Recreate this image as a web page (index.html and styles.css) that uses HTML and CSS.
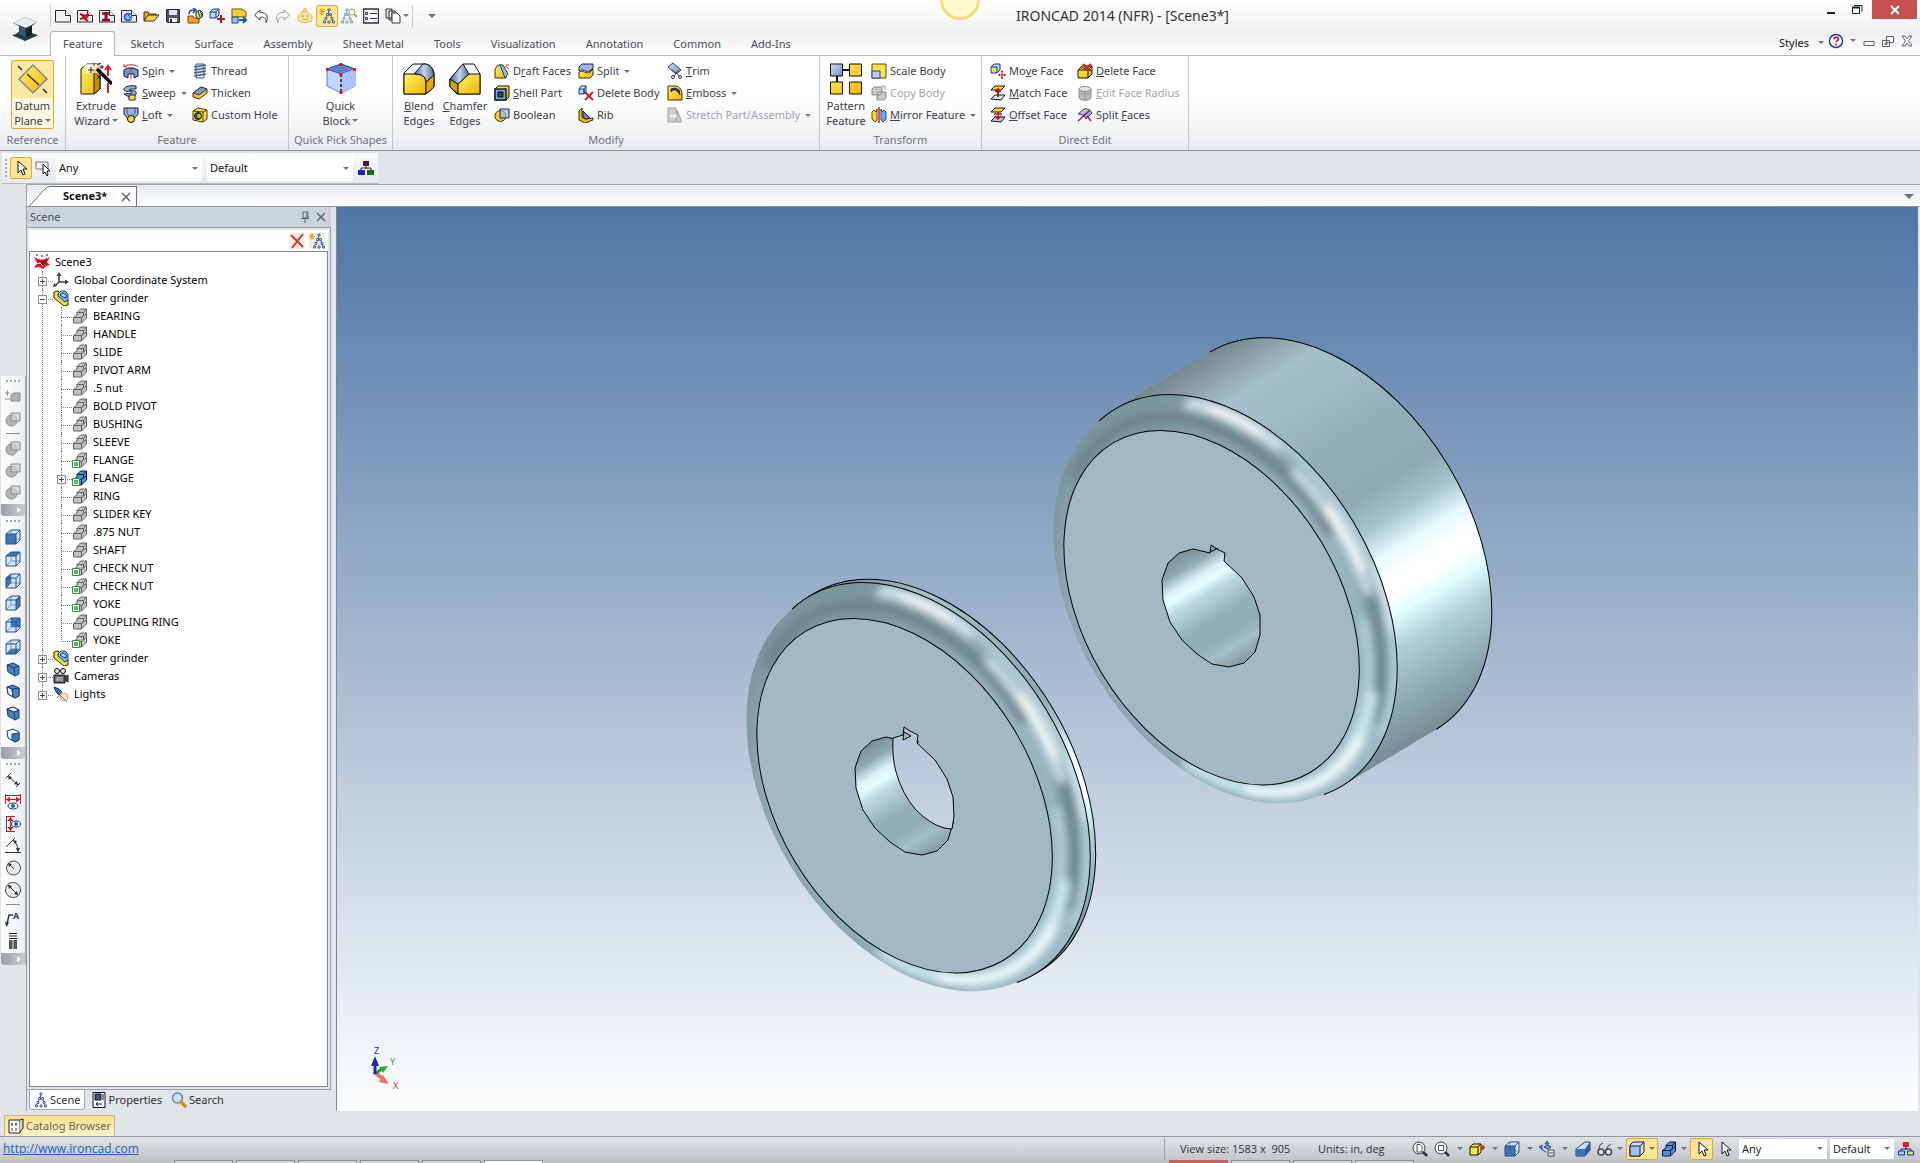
FILE: index.html
```html
<!DOCTYPE html>
<html lang="en">
<head>
<meta charset="utf-8">
<title>IRONCAD 2014 (NFR) - [Scene3*]</title>
<link rel="stylesheet" href="styles.css">
</head>
<body>
<svg class="sprite" aria-hidden="true">
  <defs>
    <linearGradient id="gy" x1="0" y1="0" x2="1" y2="1"><stop offset="0" stop-color="#fff36a"/><stop offset="1" stop-color="#f5b400"/></linearGradient>
    <linearGradient id="gb" x1="0" y1="0" x2="1" y2="1"><stop offset="0" stop-color="#d3e2f8"/><stop offset="1" stop-color="#6c8cc4"/></linearGradient>
    <linearGradient id="gsteel" x1="0" y1="0" x2="1" y2="0"><stop offset="0" stop-color="#48648e"/><stop offset=".5" stop-color="#c3d5ea"/><stop offset="1" stop-color="#4d6d9c"/></linearGradient>
  </defs>
  <symbol id="page" viewBox="0 0 16 16"><path d="M.5 2.500h10l5 5v6.500H.5z" fill="#eef0f4" stroke="#26292e"/><path d="M10.500 2.500v5h5" fill="#fff" stroke="#26292e"/></symbol>
  <symbol id="page-red" viewBox="0 0 16 16"><use href="#page"/><path d="M3 6l5 2 4-2M3 11l4-1 4 3M5 7l3 4 3-3" stroke="#c4101c" stroke-width="2" fill="none"/></symbol>
  <symbol id="page-i" viewBox="0 0 16 16"><use href="#page"/><path d="M3 5.500h8M3 12h8" stroke="#8d0f18" stroke-width="2.500"/><path d="M7 4v8" stroke="#8d0f18" stroke-width="3"/></symbol>
  <symbol id="page-cad" viewBox="0 0 16 16"><use href="#page"/><circle cx="7" cy="9" r="4" fill="#86bff0" stroke="#2b64b0"/><path d="M9 7a3 3 0 1 0 0 4M7 7l4 4" stroke="#1d4fa0" fill="none"/></symbol>
  <symbol id="open" viewBox="0 0 16 16"><path d="M1 13V4h4l1 2h7v2" fill="#d9ae35" stroke="#3a2c06"/><path d="M1 13l4-6h11l-5 6z" fill="#ffd24a" stroke="#3a2c06"/></symbol>
  <symbol id="save" viewBox="0 0 16 16"><path d="M1.500 1.500h13v13h-12l-1-1z" fill="#4a5263" stroke="#23272f"/><path d="M4 2h8v5H4z" fill="#dfe4ee"/><path d="M4 10h8v4H4z" fill="#f4f5f8"/><path d="M5 11h2v3H5z" fill="#23272f"/></symbol>
  <symbol id="import" viewBox="0 0 16 16"><path d="M1 8h5l1 2h5v5H1z" fill="#f4a428" stroke="#744a06"/><path d="M2 6c0-4 3-4 6-4M6 0l3 2-3 3" stroke="#1c49b0" stroke-width="1.500" fill="none"/><path d="M9 4l4-2 3 3-1 4-4 2-2-3z" fill="#e6d65c" stroke="#222"/><path d="M11 3l2 6M13 2l2 6" stroke="#2450a6"/></symbol>
  <symbol id="addcube" viewBox="0 0 16 16"><path d="M1 4h6v6H1zM1 4l3-3h6L7 4M7 10l3-3V1" fill="#bcd4f6" stroke="#1b3c86"/><path d="M12 7v8M8 11h8" stroke="#c0161c" stroke-width="2"/></symbol>
  <symbol id="export" viewBox="0 0 16 16"><path d="M1 1h10l4 3v5H1z" fill="#f9cd2e" stroke="#6d5204"/><path d="M1 9h6v6H1z" fill="#a8c4ee" stroke="#1b3c86"/><path d="M8 12h7M12 9l3 3-3 3" stroke="#2450a6" stroke-width="2" fill="none"/></symbol>
  <symbol id="undo" viewBox="0 0 16 16"><path d="M7 2L1.500 7 7 12V9.500c4-1 6 0 6 5C16 9 14 4 7 4.500z" fill="#fff" stroke="#3c3f44"/></symbol>
  <symbol id="redo" viewBox="0 0 16 16"><path d="M9 2l5.500 5L9 12V9.500c-4-1-6 0-6 5C0 9 2 4 9 4.500z" fill="#fff" stroke="#9a9da2"/></symbol>
  <symbol id="bell" viewBox="0 0 16 16"><path d="M2 13c-3-3 0-9 6-10 6 1 9 7 6 10-3 2-9 2-12 0z" fill="#f9e6a6" stroke="#e0b95c"/><circle cx="8" cy="2" r="1.500" fill="#f6dd8c" stroke="#e0b95c"/><circle cx="5.500" cy="8" r="1" fill="#c99b40"/><circle cx="10.500" cy="8" r="1" fill="#c99b40"/><path d="M5 11.500h6" stroke="#d9ab52"/></symbol>
  <symbol id="tree" viewBox="0 0 16 16"><path d="M8.500 3v3M7 8l-1 2M11 8l1 2M5 12l-1 1M12 12l1 1" stroke="#456a92"/><path d="M8 1h2v2H8zM6.500 5.500h2v2h-2zM9.500 5.500h2v2h-2zM5 9.500h2v2H5zM11 9.500h2v2h-2zM3.500 13h2v2h-2zM8 13h2v2H8zM12.500 13h2v2h-2z" fill="#dcefff" stroke="#456a92"/></symbol>
  <symbol id="tree-star" viewBox="0 0 16 16"><use href="#tree" x="1"/><path d="M3 0v7M0 3.500h6M1 1l4 5M5 1L1 6" stroke="#dba016"/></symbol>
  <symbol id="tree-find" viewBox="0 0 16 16"><g opacity=".6"><use href="#tree" x="-3"/></g><circle cx="11" cy="4" r="3" fill="#eef6e0" stroke="#a9a56a"/><path d="M13 6l3 3" stroke="#c9a23c" stroke-width="2"/></symbol>
  <symbol id="list" viewBox="0 0 16 16"><path d="M.5 1h15v14H.5z" fill="#f7f8fa" stroke="#303339" stroke-width="1.500"/><path d="M7 5.500h7M7 10.500h7" stroke="#303339"/><path d="M2.500 4.500h2v2h-2zM2.500 9.500h2v2h-2z" fill="#fff" stroke="#303339"/></symbol>
  <symbol id="docs" viewBox="0 0 16 16"><path d="M1 1h6v9H1zM4 3h6v9H4z" fill="#e6e8ec" stroke="#303339"/><path d="M7 5h5l3 3v7H7z" fill="#fff" stroke="#303339"/></symbol>

  <symbol id="datum" viewBox="0 0 32 32"><path d="M16 2l14 14-14 14L2 16z" fill="url(#gy)" stroke="#7b8ba0" stroke-width="1.500"/><path d="M1 3l4 4M10 11l12 11M26 26l4 4" stroke="#2d2d1a" stroke-width="1.500"/></symbol>
  <symbol id="extrude" viewBox="0 0 32 32"><path d="M1 6l6-5h13v25l-6 5H1z" fill="url(#gy)" stroke="#1d1600"/><path d="M14 8l6-6v24l-6 5z" fill="#c18f00" stroke="#1d1600"/><path d="M4 1h17v9H5z" fill="#fff" fill-opacity=".7"/><path d="M17 6l15 15" stroke="#111" stroke-width="3.500"/><path d="M28 4v9M28 20v10M25 7l3-4 3 4" stroke="#d81c22" stroke-width="2" fill="none"/><path d="M8 7h6M11 4v6M17 2l4-2M22 2v4M20 4h4M14 0v3M17 12l4 4M21 12l-4 4" stroke="#222"/></symbol>
  <symbol id="spin" viewBox="0 0 16 16"><path d="M1 7l4-2h6l4 2v6l-4 2v-4H5v4l-4-2z" fill="#7795c8" stroke="#111c33"/><path d="M1 4c3-3 11-3 14 0M1 1v3h3M8 5v11" stroke="#d3222a" fill="none"/></symbol>
  <symbol id="sweep" viewBox="0 0 16 16"><path d="M13 1C6 0 0 2 1 5c1 2 8 1 8 3 0 1-4 0-8 1l5 3c5 0 8-2 7-5-1-2-7-1-7-2 0-1 4-1 7-1z" fill="#9db5de" stroke="#111c33"/><path d="M6 10h6v5H6z" fill="#ffe14a" stroke="#222"/></symbol>
  <symbol id="loft" viewBox="0 0 16 16"><path d="M1 1h14v6l-5 6H6L1 7z" fill="#9db5de" stroke="#111c33"/><path d="M4 1v5l3 4M12 1v5l-3 4" stroke="#42597f" fill="none"/><circle cx="8" cy="12" r="3.500" fill="#ffd62c" stroke="#111"/></symbol>
  <symbol id="thread" viewBox="0 0 16 16"><path d="M4 1h8v14H4z" fill="#dbe7f6" stroke="#476089"/><path d="M2 4l12-2M2 7l12-2M2 10l12-2M2 13l12-2" stroke="#476089" stroke-width="1.500"/></symbol>
  <symbol id="thicken" viewBox="0 0 16 16"><path d="M1 8l8-6 6 2v4l-8 6-6-2z" fill="#f0c62e" stroke="#3a3000"/><path d="M1 8l8-6 6 2-8 6z" fill="#8595bd" stroke="#3a3f55"/></symbol>
  <symbol id="hole" viewBox="0 0 16 16"><path d="M1 4l5-3 9 2v9l-4 3-10-2z" fill="#ffe04a" stroke="#4b3d00"/><path d="M11 5v10M11 5l4-2M1 4l10 1" stroke="#4b3d00"/><circle cx="6" cy="9" r="3.500" fill="#1d5f68" stroke="#111"/><circle cx="7" cy="9" r="2" fill="#e2b72a"/></symbol>
  <symbol id="quick" viewBox="0 0 32 32"><path d="M2 6L16 1l14 5v17L16 30 2 23z" fill="#c3d5ff" stroke="#5a7bd0"/><path d="M2 6L16 1l14 5-14 5z" fill="#5c84cf" stroke="#2c54a8"/><path d="M16 11l14-5v17l-14 7z" fill="#aac4fa"/><path d="M16 11v19" stroke="#111" stroke-width="1.500" stroke-dasharray="3 2"/><path d="M1 5h3v3H1zM14.500 0h3v3h-3zM28 5h3v3h-3zM14.500 10h3v3h-3zM14.500 28h3v3h-3z" fill="#e01626"/></symbol>
  <symbol id="blend" viewBox="0 0 32 32"><path d="M1 10l9-9h12c5 0 9 5 9 10v13l-8 7H1z" fill="#eff4fb" stroke="#111"/><path d="M1 11h11c7 0 11 3 11 9v11H1z" fill="url(#gy)" stroke="#111"/><path d="M23 19l8-7v12l-8 7z" fill="#e8a800" stroke="#111"/><path d="M11 11L20 1h2c5 0 9 6 9 11l-8 7c0-6-5-8-12-8z" fill="url(#gsteel)" stroke="#111"/></symbol>
  <symbol id="chamfer" viewBox="0 0 32 32"><path d="M1 16L14 1h11l6 10v20H8l-7-7z" fill="#f4f8fd" stroke="#111"/><path d="M1 16l8 5v10l-8-7z" fill="#d9a100" stroke="#111"/><path d="M9 21l11-10h11v20H9z" fill="url(#gy)" stroke="#111"/><path d="M1 16L14 1l6 10L9 21z" fill="url(#gsteel)" stroke="#111"/></symbol>
  <symbol id="draft" viewBox="0 0 16 16"><path d="M1 6l3-4h4l4 9v4H1z" fill="url(#gy)" stroke="#3a3000"/><path d="M6 2h3l5 9-3 4z" fill="#9db5de" stroke="#2b3e66"/><path d="M11 3l4 3M12 2h3" stroke="#c22"/></symbol>
  <symbol id="shell" viewBox="0 0 16 16"><path d="M1 4l3-3h11v11l-3 3H1z" fill="url(#gy)" stroke="#1c1500"/><path d="M1 4h11v11H1z" fill="#7fa0d4" stroke="#12203c" stroke-width="1.500"/><path d="M4 7h5v5H4z" fill="#2d4470" stroke="#111"/></symbol>
  <symbol id="bool" viewBox="0 0 16 16"><circle cx="6.500" cy="9" r="5.500" fill="#f7cb2c" stroke="#3a3000"/><path d="M6 2h9v9H6z" fill="#9db5e8" fill-opacity=".7" stroke="#1b2d55"/></symbol>
  <symbol id="split" viewBox="0 0 16 16"><path d="M1 9c4-3 7 3 11 0l3-3v6l-3 3H1z" fill="url(#gy)" stroke="#3a3000"/><path d="M1 4l3-3h11v4l-3 3c-4 2-7-3-11 0z" fill="#9db5e8" stroke="#1b2d55"/></symbol>
  <symbol id="delbody" viewBox="0 0 16 16"><path d="M1 4h5v5H1zM1 4l2-3h5v6L6 9V4l2-3" fill="#bcd4f6" stroke="#1b3c86"/><path d="M7 7l8 8M15 7l-8 8" stroke="#c0232b" stroke-width="2"/></symbol>
  <symbol id="rib" viewBox="0 0 16 16"><path d="M1 4l3-3v9l3 2 8-1v2l-8 3-6-3z" fill="#e8bd2a" stroke="#3a3000"/><path d="M5 4l7 7-4 1-3-2z" fill="#6f87b5" stroke="#222"/></symbol>
  <symbol id="trim" viewBox="0 0 16 16"><path d="M1 4l5-4 8 7-5 4z" fill="url(#gb)" stroke="#333a55"/><path d="M5 7l8 6M12 7l-5 6" stroke="#444"/><circle cx="6" cy="14" r="1.500" fill="none" stroke="#333"/><circle cx="13" cy="14" r="1.500" fill="none" stroke="#333"/></symbol>
  <symbol id="emboss" viewBox="0 0 16 16"><path d="M1 1h8c4 1 6 4 6 8v6H1z" fill="url(#gy)" stroke="#3a3000"/><path d="M4 7c3-4 6-2 9 3l-1-5-4-2-4 1z" fill="#244070" stroke="#16284a"/></symbol>
  <symbol id="stretch" viewBox="0 0 16 16"><path d="M1 1h8v14H1zM10 3l5 12h-5z" fill="#cfcfcf" stroke="#a0a0a0"/><path d="M3 9h6M7 7l2 2-2 2" stroke="#fff" stroke-width="1.500" fill="none"/></symbol>
  <symbol id="pattern" viewBox="0 0 32 32"><path d="M12 7h8M7 12v8" stroke="#111" stroke-width="2"/><path d="M.5 1h12v12H.5z" fill="url(#gb)" stroke="#111"/><path d="M19.500 1h12v12h-12zM.5 19h12v12H.5zM19.500 19h12v12h-12z" fill="url(#gy)" stroke="#111"/></symbol>
  <symbol id="scale" viewBox="0 0 16 16"><path d="M1 1h14v14H1z" fill="#ffe04a" stroke="#5a4a00"/><path d="M1 8h8v7H1z" fill="#b8ccf2" stroke="#2c4478"/></symbol>
  <symbol id="copy" viewBox="0 0 16 16"><path d="M1 4l2-2h8v6l-2 2H1zM6 9l2-2h7v6l-2 2H6z" fill="#c9c9c9" stroke="#8e8e8e"/><path d="M11 1h3v4" stroke="#999" fill="none"/></symbol>
  <symbol id="mirror" viewBox="0 0 16 16"><path d="M6 2v11l-2 2-3-3V5l2-2 2 2z" fill="#ffd62c" stroke="#5a4a00"/><path d="M10 2v11l2 2 3-3V5l-2-2-2 2z" fill="#7da6ee" stroke="#1f4ca0"/><path d="M8 0v16" stroke="#d0202a" stroke-width="1.500"/></symbol>
  <symbol id="move" viewBox="0 0 16 16"><path d="M1 4h6v6H1zM1 4l3-3h6v6l-3 3" fill="#bcd4f6" stroke="#1b3c86"/><path d="M2 5h4v4H2z" fill="#ffdf4a"/><path d="M12 8v8M8 12h8" stroke="#c0232b"/><path d="M12 7l1.500 2h-3zM12 16l1.500-2h-3zM8 12l2-1.500v3zM16 12l-2-1.500v3z" fill="#c0232b"/></symbol>
  <symbol id="match" viewBox="0 0 16 16"><path d="M1 5l4-4h10l-4 4z" fill="#ffd62c" stroke="#111"/><path d="M1 14l4-4h10l-4 5z" fill="#dde3f4" stroke="#111"/><path d="M8 4v8M5.500 7L8 4l2.500 3" stroke="#b3141c" stroke-width="2" fill="none"/></symbol>
  <symbol id="offset" viewBox="0 0 16 16"><path d="M1 5l4-4h10l-4 4z" fill="#ffd62c" stroke="#111"/><path d="M1 14l4-4h10l-4 5z" fill="#b9c8ee" stroke="#111"/><path d="M8 5v7M5 9l3 3 3-3M4 7h8" stroke="#b3141c" stroke-width="1.500" fill="none"/></symbol>
  <symbol id="delface" viewBox="0 0 16 16"><path d="M1 7l4-4h10v8l-4 4H1z" fill="url(#gy)" stroke="#1c1500"/><path d="M1 7h10v8M11 7l4-4" stroke="#1c1500" fill="none"/><path d="M3 6l3-3h7l-3 3z" fill="#58a03c"/><path d="M6 1l8 7M14 1L7 7" stroke="#d21c24" stroke-width="2"/></symbol>
  <symbol id="editrad" viewBox="0 0 16 16"><path d="M2 4v9c2 3 10 3 12 0V4z" fill="#bcbcbc" stroke="#8a8a8a"/><ellipse cx="8" cy="4" rx="6" ry="2.500" fill="#e4e4e4" stroke="#8a8a8a"/><path d="M4 9h8M8 7v7" stroke="#888" stroke-dasharray="2 1"/></symbol>
  <symbol id="splitf" viewBox="0 0 16 16"><path d="M1 7l6-5c4-1 6 1 8 4l-6 6c-1-3-4-5-8-5z" fill="url(#gb)" stroke="#333a55"/><path d="M1 14L13 3M10 9l4 5" stroke="#b3124a" stroke-width="1.500"/></symbol>

  <symbol id="cursor" viewBox="0 0 16 16"><path d="M5 1v12l3-3 2 5 2-1-2-5h4z" fill="#fff" stroke="#111"/></symbol>
  <symbol id="boxcursor" viewBox="0 0 16 16"><path d="M1 2h12v7H1z" fill="none" stroke="#777"/><path d="M8 4v10l2-2 2 4 1-1-1-4h3z" fill="#fff" stroke="#111"/></symbol>
  <symbol id="hier" viewBox="0 0 16 16"><path d="M8 5v4M3 11V8h10v3" stroke="#222" fill="none"/><path d="M5 1h6v5H5z" fill="#5c1416"/><path d="M0 10h7v5H0z" fill="#1420c8"/><path d="M9 10h7v5H9z" fill="#14681c"/></symbol>
  <symbol id="hier2" viewBox="0 0 16 16"><path d="M8 5v4M3 11V8h10v3" stroke="#1c2f8e" fill="none"/><path d="M5 1h6v5H5z" fill="#e01a2c"/><path d="M.5 10h6v4h-6z" fill="#9fd0f4" stroke="#1c2f8e"/><path d="M9.500 10h6v4h-6z" fill="#c4ec60" stroke="#1c2f8e"/></symbol>

  <symbol id="scene" viewBox="0 0 16 16"><path d="M0 3l5 2.500h6L16 3l-3 5 3 3-4 1-3 3-4-2-5 1 3-5z" fill="#e01620"/><path d="M4 5l4 2 5-3-1 5-4 3-4-2z" fill="#a40c14"/><path d="M2 10l4-1 3 3" stroke="#fff" fill="none"/><path d="M3 0v2M8 1v2M13 0v2" stroke="#111"/></symbol>
  <symbol id="axes" viewBox="0 0 16 16"><path d="M6 2v8h8M6 10l-4 4" stroke="#3b3b3b" stroke-width="1.500" fill="none"/><path d="M6 0l2.500 4h-5zM16 10l-4-2.500v5zM0 15l1-4 3 3z" fill="#3b3b3b"/></symbol>
  <symbol id="asm" viewBox="0 0 16 16"><path d="M1 2l4-1 10 9v5l-4 1L1 8z" fill="#f1de28" stroke="#2e2a06"/><path d="M5 4l3-3h4l3 3v6l-3 2-7-6z" fill="#7db4ec" stroke="#1d3f80"/><path d="M7 5l3-2 3 2v3l-3-1z" fill="#c3e0fb" stroke="#1d3f80"/></symbol>
  <symbol id="part" viewBox="0 0 16 16"><path d="M1.500 9.500L5 7V4.500L8.500 1h6v9l-5 5h-8z" fill="#c2c2c2" stroke="#636363"/><path d="M1.500 9.500h8V15M9.500 9.500l2-2.500V4.500H5M11.500 4.500l3-3.500M9.500 9.500l5-4" stroke="#636363" fill="none"/></symbol>
  <symbol id="part-blue" viewBox="0 0 16 16"><path d="M1.500 9.500L5 7V4.500L8.500 1h6v9l-5 5h-8z" fill="#4f92e0" stroke="#08163a"/><path d="M1.500 9.500h8V15M9.500 9.500l2-2.500V4.500H5M11.500 4.500l3-3.500M9.500 9.500l5-4" stroke="#08163a" fill="none"/></symbol>
  <symbol id="tag" viewBox="0 0 16 16"><path d="M.5 8.500h7v7h-7z" fill="#fff" stroke="#2f8f3c"/><path d="M2 10h4v4H2z" fill="#5cb566"/></symbol>
  <symbol id="part-tag" viewBox="0 0 16 16"><use href="#part"/><use href="#tag"/></symbol>
  <symbol id="part-blue-tag" viewBox="0 0 16 16"><use href="#part-blue"/><use href="#tag"/></symbol>
  <symbol id="camera" viewBox="0 0 16 16"><circle cx="4" cy="3" r="2.500" fill="#ddd" stroke="#111"/><circle cx="10" cy="3" r="2.500" fill="#ddd" stroke="#111"/><path d="M1 7h11v8H1zM12 9l3-2v7l-3-2" fill="#62626e" stroke="#111"/><path d="M3 10h7M3 12h7" stroke="#ddd"/></symbol>
  <symbol id="light" viewBox="0 0 16 16"><path d="M1 1l5 2 3 3-3 3-3-3z" fill="#3d67a8" stroke="#1a3361"/><circle cx="11" cy="11" r="4" fill="#fbe3bd" stroke="#c8a77a"/><path d="M4 12L9 6M7 9l7 7" stroke="#8f7a60"/></symbol>

  <symbol id="g-size" viewBox="0 0 16 16"><path d="M0 4h5M2.500 1.500v5M0 10h5" stroke="#8f8f8f"/><path d="M6 6l3-2h6v8H6z" fill="#b3b3b3" stroke="#8a8a8a"/></symbol>
  <symbol id="g-bool" viewBox="0 0 16 16"><circle cx="6.500" cy="9.500" r="5.500" fill="#b5b5b5" stroke="#898989"/><path d="M6 2h9v8H6z" fill="#cfcfcf" fill-opacity=".7" stroke="#898989"/></symbol>
  <symbol id="wire" viewBox="0 0 16 16"><path d="M1 5l5-4h9v10l-4 4H1z" fill="#d3e6f8"/><path d="M6 1v9h9M6 10l-5 5" stroke="#6f9cc8" fill="none"/></symbol>
  <symbol id="edges" viewBox="0 0 16 16"><path d="M1 5l5-4h9v10l-4 4H1zM1 5h10v10M11 5l4-4" stroke="#24507f" fill="none"/></symbol>
  <symbol id="v-front" viewBox="0 0 16 16"><use href="#wire"/><path d="M1 5h10v10H1z" fill="#3c76b4"/><use href="#edges"/></symbol>
  <symbol id="v-top" viewBox="0 0 16 16"><use href="#wire"/><path d="M1 5l5-4h9l-4 4z" fill="#3c76b4"/><use href="#edges"/></symbol>
  <symbol id="v-left" viewBox="0 0 16 16"><use href="#wire"/><path d="M1 5l5-4v9l-5 5z" fill="#3c76b4"/><use href="#edges"/></symbol>
  <symbol id="v-right" viewBox="0 0 16 16"><use href="#wire"/><path d="M11 5l4-4v10l-4 4z" fill="#3c76b4"/><use href="#edges"/></symbol>
  <symbol id="v-back" viewBox="0 0 16 16"><use href="#wire"/><path d="M6 1h9v9H6z" fill="#3c76b4"/><use href="#edges"/></symbol>
  <symbol id="v-bottom" viewBox="0 0 16 16"><use href="#wire"/><path d="M1 15l5-5h9l-4 5z" fill="#3c76b4"/><use href="#edges"/></symbol>
  <symbol id="i-solid" viewBox="0 0 16 16"><path d="M2 4l6-2 6 3v8l-4 2-7-4z" fill="#4a82bd" stroke="#1d3f66"/><path d="M2 4l7 3 5-2M9 7l1 8" stroke="#1d3f66" fill="none"/></symbol>
  <symbol id="i-left" viewBox="0 0 16 16"><use href="#i-solid"/><path d="M2 4l5 2 1 8-5-3z" fill="#e6f0fa" stroke="#1d3f66"/><path d="M7 6l7-1v8l-4 2-2-1z" fill="#4a82bd" stroke="#1d3f66"/></symbol>
  <symbol id="i-top" viewBox="0 0 16 16"><use href="#i-solid"/><path d="M2 4l6-2 6 3-5 2z" fill="#e6f0fa" stroke="#1d3f66"/></symbol>
  <symbol id="i-corner" viewBox="0 0 16 16"><path d="M2 4l6-2 6 3v8l-4 2-7-4z" fill="#eef5fc" stroke="#1d3f66"/><path d="M7 7l7-1v7l-4 2-3-2z" fill="#3c76b4" stroke="#1d3f66"/></symbol>
  <symbol id="dim" viewBox="0 0 16 16"><path d="M1 6l5-5M11 15l4-4M3 4l10 9" stroke="#333" fill="none"/><path d="M3 4l4 1-3 3zM13 13l-4-1 3-3z" fill="#333"/></symbol>
  <symbol id="dim-h" viewBox="0 0 16 16"><path d="M.5 0v10M15.500 0v10M1 5.500h14" stroke="#d8141c"/><path d="M1 1.500h14" stroke="#444"/><path d="M1 5.500l4-3v6zM15 5.500l-4-3v6z" fill="#d8141c"/><ellipse cx="8" cy="12" rx="5" ry="3" fill="#fff" stroke="#1c3c78"/><circle cx="8" cy="12" r="2" fill="#1c58b8"/></symbol>
  <symbol id="dim-v" viewBox="0 0 16 16"><path d="M1.500 1v14" stroke="#444"/><path d="M1 .5h9M1 15.500h9M5.500 1v14" stroke="#d8141c"/><path d="M5.500 1l3 4h-6zM5.500 15l3-4h-6z" fill="#d8141c"/><ellipse cx="11" cy="8" rx="4.500" ry="3" fill="#fff" stroke="#1c3c78"/><circle cx="11" cy="8" r="2" fill="#1c58b8"/></symbol>
  <symbol id="dim-a" viewBox="0 0 16 16"><path d="M0 14.500h16M1 9l9-9M8 3c4 2 5 6 5 11" stroke="#333" fill="none"/><path d="M8 2l4 1-2 3zM13 14l-2-4h4z" fill="#333"/></symbol>
  <symbol id="dim-r" viewBox="0 0 16 16"><circle cx="8.500" cy="8" r="7" fill="#ececec" stroke="#4a4a4a"/><path d="M4 4l5 5" stroke="#333"/><path d="M3 3l4 1-3 3z" fill="#333"/></symbol>
  <symbol id="dim-d" viewBox="0 0 16 16"><circle cx="8" cy="8" r="7.500" fill="#ececec" stroke="#4a4a4a"/><path d="M3 3l10 10" stroke="#333"/><path d="M3 3l4 1-3 3zM13 13l-4-1 3-3z" fill="#333"/></symbol>
  <symbol id="bolt" viewBox="0 0 16 16"><path d="M4 .5h8M4 3h8M4 5.500h8" stroke="#222"/><path d="M4 7h8v9H4z" fill="#555"/><path d="M7 7h2v9H7z" fill="#a0a0a0"/></symbol>

  <symbol id="props" viewBox="0 0 16 16"><path d="M2 .5h12v15H2z" fill="#fff" stroke="#111"/><path d="M4 2h6v6H4z" fill="#35598c" stroke="#111"/><path d="M12 2v6M5 12h6M5 12l2-2M5 12l2 2" stroke="#111"/></symbol>
  <symbol id="search" viewBox="0 0 16 16"><circle cx="6.500" cy="6" r="5" fill="#cfe0fb" stroke="#6c7fa8" stroke-width="1.500"/><path d="M10 10l4 4" stroke="#c88f1e" stroke-width="3.500" stroke-linecap="round"/></symbol>
  <symbol id="catalog" viewBox="0 0 16 16"><path d="M1 2h11v13H1z" fill="#fff" stroke="#222"/><path d="M12 2l3-1v9l-3 4" fill="#d6d6d6" stroke="#222"/><path d="M4 5v3M8 5v3M4 10v3M8 10v3M3 6h2M7 6h2" stroke="#333"/></symbol>
  <symbol id="redx" viewBox="0 0 16 16"><path d="M2 2l12 12M14 1L3 15" stroke="#d3333a" stroke-width="2"/></symbol>
  <symbol id="pin" viewBox="0 0 16 16"><path d="M6 3h5v6H6zM4 9.500h8M8 10v4M10 3v6" stroke="#5b6470" fill="none"/></symbol>
  <symbol id="close" viewBox="0 0 16 16"><path d="M4 4l8 8M12 4l-8 8" stroke="#5b6470" stroke-width="1.500"/></symbol>
  <symbol id="zoomfit" viewBox="0 0 16 16"><circle cx="7" cy="7" r="6" fill="#eef0f2" stroke="#444"/><path d="M5 3.500h3l2 2V11H5z" fill="#fff" stroke="#555"/><path d="M11 11l4 4" stroke="#333" stroke-width="2.500"/></symbol>
  <symbol id="zoomwin" viewBox="0 0 16 16"><circle cx="7" cy="7" r="6" fill="#eef0f2" stroke="#444"/><path d="M4.500 4.500h5v5h-5z" fill="#fff" stroke="#555"/><path d="M11 11l4 4" stroke="#333" stroke-width="2.500"/></symbol>
  <symbol id="ycube" viewBox="0 0 16 16"><path d="M1 6l3-3h8v8l-3 3H1z" fill="#ffe450" stroke="#111"/><path d="M1 6h8v8M9 6l3-3" fill="none" stroke="#111"/><path d="M14 4v5M12 6.500h4" stroke="#d8141c" stroke-width="1.500"/></symbol>
  <symbol id="fly" viewBox="0 0 16 16"><path d="M8 0l2 3H6zM0 6l3-2v4zM5 6l4-2 3 2-3 2zM2 8l5 3" fill="#6ba2d6" stroke="#244e80"/><path d="M9 9h6v6H9z" fill="#f2f2f2" stroke="#444"/><path d="M10 12h4" stroke="#444"/></symbol>
  <symbol id="wedge" viewBox="0 0 16 16"><path d="M1 8L10 1h5v8l-5 6H1z" fill="#cbe0f4" stroke="#24507f"/><path d="M1 8h9v7H1z" fill="#3c76b4"/><path d="M10 8l5-7v8l-5 6z" fill="#2d5f98"/></symbol>
  <symbol id="glasses" viewBox="0 0 16 16"><circle cx="4" cy="11" r="3" fill="#dbe6f0" stroke="#445" stroke-width="1.500"/><circle cx="11.500" cy="11" r="3" fill="#dbe6f0" stroke="#445" stroke-width="1.500"/><path d="M1.500 9L3 4l3-2M9 9l2-4 3-2M7 11h2" stroke="#445" fill="none"/></symbol>
  <symbol id="pcube" viewBox="0 0 16 16"><path d="M1 4l3-3h11v10l-4 4H1z" fill="#cfdffa" stroke="#223"/><path d="M1 5h10v10H1z" fill="#a2bdf0" stroke="#223"/><path d="M11 5l4-4" stroke="#223"/></symbol>
  <symbol id="logo" viewBox="0 0 26 26"><path d="M1 8l12-6 12 5-5 4v7l5 2-12 6-11-6 5-3v-6z" fill="#263c4e"/><path d="M1 8l12-6 12 5-11 6z" fill="#e9edf0"/><path d="M3 8l10 5 1 9-9-4 3-2v-5z" fill="#3b576b"/><path d="M1 20l12 5 12-5" stroke="#263c4e" stroke-width="1.500" fill="none"/><path d="M14 13l6-2v8l-6 4z" fill="#16222e"/></symbol>
</svg>

<header class="header">
  <button class="app-button" aria-label="Application menu"><svg class="logo"><use href="#logo"/></svg></button>
  <div class="title-row">
    <div class="quick-access">
      <button aria-label="New"><svg><use href="#page"/></svg></button>
      <button aria-label="New scene"><svg><use href="#page-red"/></svg></button>
      <button aria-label="New drawing"><svg><use href="#page-i"/></svg></button>
      <button aria-label="New CAD"><svg><use href="#page-cad"/></svg></button>
      <button aria-label="Open"><svg><use href="#open"/></svg></button>
      <button aria-label="Save"><svg><use href="#save"/></svg></button>
      <button aria-label="Import"><svg><use href="#import"/></svg></button>
      <button aria-label="Insert part"><svg><use href="#addcube"/></svg></button>
      <button aria-label="Export"><svg><use href="#export"/></svg></button>
      <button aria-label="Undo"><svg><use href="#undo"/></svg></button>
      <button aria-label="Redo"><svg><use href="#redo"/></svg></button>
      <button aria-label="Render"><svg><use href="#bell"/></svg></button>
      <button class="is-on" aria-label="Scene browser"><svg><use href="#tree-star"/></svg></button>
      <button aria-label="Find in tree"><svg><use href="#tree-find"/></svg></button>
      <button aria-label="Properties"><svg><use href="#list"/></svg></button>
      <button class="wide" aria-label="Windows"><svg><use href="#docs"/></svg><i class="caret"></i></button>
      <button class="more" aria-label="Customize"><i class="caret bar"></i></button>
    </div>
    <h1 class="window-title">IRONCAD 2014 (NFR) - [Scene3*]</h1>
    <div class="window-buttons">
      <button aria-label="Minimize"><svg viewBox="0 0 16 16"><path d="M4 11h8" stroke="#222" stroke-width="2"/></svg></button>
      <button aria-label="Restore"><svg viewBox="0 0 16 16"><path d="M3.500 5.500h7v6h-7zM5 3.500h8v6" stroke="#222" fill="none"/><path d="M3 5.500h8" stroke="#222" stroke-width="2"/></svg></button>
      <button class="close" aria-label="Close"><svg viewBox="0 0 16 16"><path d="M4 4l8 8M12 4l-8 8" stroke="#fff" stroke-width="2"/></svg></button>
    </div>
  </div>
  <div class="tab-row">
    <nav class="tabs">
      <button class="is-active">Feature</button><button>Sketch</button><button>Surface</button><button>Assembly</button><button>Sheet Metal</button><button>Tools</button><button>Visualization</button><button>Annotation</button><button>Common</button><button>Add-Ins</button>
    </nav>
    <div class="tab-tools">
      <button class="styles-button">Styles <i class="caret"></i></button>
      <button aria-label="Help"><svg viewBox="0 0 16 16"><circle cx="8" cy="8" r="6.500" fill="#fff" stroke="#24407c" stroke-width="1.500"/><path d="M6 6.500c0-3 4.500-3 4.500-.5 0 1.500-2 1.500-2.200 3.200M8 10.500v2" stroke="#e01626" stroke-width="1.700" fill="none"/></svg></button>
      <button class="help-menu" aria-label="Help options"><i class="caret"></i></button>
      <button aria-label="Minimize document"><svg viewBox="0 0 16 16"><path d="M3 8.500h10v4H3z" fill="#fff" stroke="#5a5f78"/></svg></button>
      <button aria-label="Restore document"><svg viewBox="0 0 16 16"><path d="M6.500 3.500h7v6h-7zM2.500 7.500h7v6h-7zM5 10h2v1.500H5z" fill="#fff" stroke="#5a5f78"/></svg></button>
      <button aria-label="Close document"><svg viewBox="0 0 16 16"><path d="M3 3h3l2 3 2-3h3l-3.500 5 3.500 5h-3l-2-3-2 3H3l3.500-5z" fill="#fff" stroke="#5a5f78"/></svg></button>
    </div>
  </div>
  <span class="spot" aria-hidden="true"></span>
</header>

<div class="ribbon">
  <section class="group g-reference">
    <div class="group-body"><button class="big is-on"><svg><use href="#datum"/></svg><span>Datum<br>Plane<i class="caret"></i></span></button></div>
    <h2>Reference</h2>
  </section>
  <section class="group g-feature">
    <div class="group-body">
      <button class="big"><svg><use href="#extrude"/></svg><span>Extrude<br>Wizard<i class="caret"></i></span></button>
      <div class="stack after-wizard"><button><svg><use href="#spin"/></svg>S<u>p</u>in <i class="caret"></i></button><button><svg><use href="#sweep"/></svg><u>S</u>weep <i class="caret"></i></button><button><svg><use href="#loft"/></svg><u>L</u>oft <i class="caret"></i></button></div>
      <div class="stack"><button><svg><use href="#thread"/></svg>Thread</button><button><svg><use href="#thicken"/></svg>Thicken</button><button><svg><use href="#hole"/></svg>Custom Hole</button></div>
    </div>
    <h2>Feature</h2>
  </section>
  <section class="group g-quick">
    <div class="group-body"><button class="big"><svg><use href="#quick"/></svg><span>Quick<br>Block<i class="caret"></i></span></button></div>
    <h2>Quick Pick Shapes</h2>
  </section>
  <section class="group g-modify">
    <div class="group-body">
      <button class="big"><svg><use href="#blend"/></svg><span><u>B</u>lend<br>Edges</span></button>
      <button class="big"><svg><use href="#chamfer"/></svg><span><u>C</u>hamfer<br>Edges</span></button>
      <div class="stack after-big"><button><svg><use href="#draft"/></svg>D<u>r</u>aft Faces</button><button><svg><use href="#shell"/></svg><u>S</u>hell Part</button><button><svg><use href="#bool"/></svg>Boolean</button></div>
      <div class="stack"><button><svg><use href="#split"/></svg>Split <i class="caret"></i></button><button><svg><use href="#delbody"/></svg>Delete Body</button><button><svg><use href="#rib"/></svg>Rib</button></div>
      <div class="stack"><button><svg><use href="#trim"/></svg><u>T</u>rim</button><button><svg><use href="#emboss"/></svg><u>E</u>mboss <i class="caret"></i></button><button disabled><svg><use href="#stretch"/></svg>Stretch Part/Assembly <i class="caret"></i></button></div>
    </div>
    <h2>Modify</h2>
  </section>
  <section class="group g-transform">
    <div class="group-body">
      <button class="big"><svg><use href="#pattern"/></svg><span>Pattern<br>Feature</span></button>
      <div class="stack"><button><svg><use href="#scale"/></svg>Scale Body</button><button disabled><svg><use href="#copy"/></svg>Copy Body</button><button><svg><use href="#mirror"/></svg><u>M</u>irror Feature <i class="caret"></i></button></div>
    </div>
    <h2>Transform</h2>
  </section>
  <section class="group g-direct">
    <div class="group-body">
      <div class="stack"><button><svg><use href="#move"/></svg>Mo<u>v</u>e Face</button><button><svg><use href="#match"/></svg><u>M</u>atch Face</button><button><svg><use href="#offset"/></svg><u>O</u>ffset Face</button></div>
      <div class="stack"><button><svg><use href="#delface"/></svg><u>D</u>elete Face</button><button disabled><svg><use href="#editrad"/></svg><u>E</u>dit Face Radius</button><button><svg><use href="#splitf"/></svg><span>Split <u>F</u>aces</span></button></div>
    </div>
    <h2>Direct Edit</h2>
  </section>
</div>

<div class="toolbar-row">
  <div class="toolbar">
    <i class="grip"></i>
    <button class="tool is-on" aria-label="Select"><svg><use href="#cursor"/></svg></button>
    <button class="tool" aria-label="Box select"><svg><use href="#boxcursor"/></svg></button>
    <label class="combo"><select aria-label="Selection filter"><option>Any</option></select><i class="caret"></i></label>
    <label class="combo"><select aria-label="Configuration"><option>Default</option></select><i class="caret"></i></label>
    <button class="tool" aria-label="Configurations"><svg><use href="#hier"/></svg></button>
  </div>
</div>

<main class="workspace">
  <aside class="dock">
    <div class="vbar">
      <i class="dots"></i>
      <button aria-label="Size"><svg><use href="#g-size"/></svg></button>
      <button aria-label="Combine"><svg><use href="#g-bool"/></svg></button>
      <hr>
      <button aria-label="Union"><svg><use href="#g-bool"/></svg></button>
      <button aria-label="Subtract"><svg><use href="#g-bool"/></svg></button>
      <button aria-label="Intersect"><svg><use href="#g-bool"/></svg></button>
      <button class="cap" aria-label="More"><i></i></button>
    </div>
    <div class="vbar">
      <i class="dots"></i>
      <button aria-label="Front"><svg><use href="#v-front"/></svg></button>
      <button aria-label="Top"><svg><use href="#v-top"/></svg></button>
      <button aria-label="Left"><svg><use href="#v-left"/></svg></button>
      <button aria-label="Right"><svg><use href="#v-right"/></svg></button>
      <button aria-label="Back"><svg><use href="#v-back"/></svg></button>
      <button aria-label="Bottom"><svg><use href="#v-bottom"/></svg></button>
      <button aria-label="Isometric"><svg><use href="#i-solid"/></svg></button>
      <button aria-label="Isometric left"><svg><use href="#i-left"/></svg></button>
      <button aria-label="Isometric top"><svg><use href="#i-top"/></svg></button>
      <button aria-label="Isometric corner"><svg><use href="#i-corner"/></svg></button>
      <button class="cap" aria-label="More"><i></i></button>
    </div>
    <div class="vbar">
      <i class="dots"></i>
      <button aria-label="Dimension"><svg><use href="#dim"/></svg></button>
      <button aria-label="Horizontal dimension"><svg><use href="#dim-h"/></svg></button>
      <button aria-label="Vertical dimension"><svg><use href="#dim-v"/></svg></button>
      <button aria-label="Angle"><svg><use href="#dim-a"/></svg></button>
      <button aria-label="Radius"><svg><use href="#dim-r"/></svg></button>
      <button aria-label="Diameter"><svg><use href="#dim-d"/></svg></button>
      <hr>
      <button class="note" aria-label="Text"><svg viewBox="0 0 16 16"><path d="M2 13l2-9h4" stroke="#1c3560" fill="none" stroke-width="1.500"/><path d="M0 11l4 .5L1.500 16z" fill="#1c3560"/></svg><b>A</b></button>
      <button aria-label="Thread note"><svg><use href="#bolt"/></svg></button>
      <button class="cap" aria-label="More"><i></i></button>
    </div>
  </aside>

  <div class="document">
    <div class="doc-tabs">
      <div class="doc-tab"><svg class="slant" viewBox="0 0 22 20"><path d="M0 20.500L16 3q2-2.500 6-2.500V20.500z" fill="#fff"/><path d="M0 20.500L16 3q2-2.500 6-2.500" fill="none" stroke="#6f757c"/></svg><span>Scene3*</span><button aria-label="Close tab"><svg><use href="#close"/></svg></button></div>
      <button class="tab-list" aria-label="Tab list"><i class="caret large"></i></button>
    </div>
    <div class="content">
      <div class="side">
        <section class="panel">
          <div class="panel-head"><span>Scene</span><button aria-label="Pin"><svg><use href="#pin"/></svg></button><button aria-label="Close panel"><svg><use href="#close"/></svg></button></div>
          <div class="panel-body">
            <div class="filter"><input type="text" aria-label="Search tree"><button aria-label="Clear"><svg><use href="#redx"/></svg></button><button aria-label="Show tree"><svg><use href="#tree-star"/></svg></button></div>
            <div class="tree">
              <div class="row root"><svg><use href="#scene"/></svg>Scene3</div>
              <ul class="level-1">
                <li><div class="row"><b class="box plus"></b><svg><use href="#axes"/></svg>Global Coordinate System</div></li>
                <li><div class="row"><b class="box"></b><svg><use href="#asm"/></svg>center grinder</div>
                  <ul class="level-2">
                    <li><div class="row"><svg><use href="#part"/></svg>BEARING</div></li>
                    <li><div class="row"><svg><use href="#part"/></svg>HANDLE</div></li>
                    <li><div class="row"><svg><use href="#part"/></svg>SLIDE</div></li>
                    <li><div class="row"><svg><use href="#part"/></svg>PIVOT ARM</div></li>
                    <li><div class="row"><svg><use href="#part"/></svg>.5 nut</div></li>
                    <li><div class="row"><svg><use href="#part"/></svg>BOLD PIVOT</div></li>
                    <li><div class="row"><svg><use href="#part"/></svg>BUSHING</div></li>
                    <li><div class="row"><svg><use href="#part"/></svg>SLEEVE</div></li>
                    <li><div class="row"><svg><use href="#part-tag"/></svg>FLANGE</div></li>
                    <li><div class="row"><b class="box plus"></b><svg><use href="#part-blue-tag"/></svg>FLANGE</div></li>
                    <li><div class="row"><svg><use href="#part"/></svg>RING</div></li>
                    <li><div class="row"><svg><use href="#part"/></svg>SLIDER KEY</div></li>
                    <li><div class="row"><svg><use href="#part"/></svg>.875 NUT</div></li>
                    <li><div class="row"><svg><use href="#part"/></svg>SHAFT</div></li>
                    <li><div class="row"><svg><use href="#part-tag"/></svg>CHECK NUT</div></li>
                    <li><div class="row"><svg><use href="#part-tag"/></svg>CHECK NUT</div></li>
                    <li><div class="row"><svg><use href="#part-tag"/></svg>YOKE</div></li>
                    <li><div class="row"><svg><use href="#part"/></svg>COUPLING RING</div></li>
                    <li><div class="row"><svg><use href="#part-tag"/></svg>YOKE</div></li>
                  </ul>
                </li>
                <li><div class="row"><b class="box plus"></b><svg><use href="#asm"/></svg>center grinder</div></li>
                <li><div class="row"><b class="box plus"></b><svg><use href="#camera"/></svg>Cameras</div></li>
                <li><div class="row"><b class="box plus"></b><svg><use href="#light"/></svg>Lights</div></li>
              </ul>
            </div>
          </div>
        </section>
        <nav class="panel-tabs">
          <button class="is-active"><svg><use href="#tree"/></svg>Scene</button>
          <button><svg><use href="#props"/></svg>Properties</button>
          <button><svg><use href="#search"/></svg>Search</button>
        </nav>
      </div>

      <div class="viewport">
        <svg viewBox="337 207 1581 904" role="img" aria-label="Two flanges in isometric view">
          <defs>
            <linearGradient id="side" gradientUnits="userSpaceOnUse" x1="-220" y1="0" x2="220" y2="0">
              <stop offset="0" stop-color="#73898f"/><stop offset=".05" stop-color="#8a9fa6"/><stop offset=".12" stop-color="#a4c0ca"/><stop offset=".2" stop-color="#a0bcc6"/><stop offset=".32" stop-color="#93b1ba"/><stop offset=".46" stop-color="#8cabb4"/><stop offset=".53" stop-color="#a4c3ca"/><stop offset=".6" stop-color="#e4fbff"/><stop offset=".65" stop-color="#fff"/><stop offset=".69" stop-color="#fff"/><stop offset=".73" stop-color="#e0feff"/><stop offset=".8" stop-color="#b0d0d7"/><stop offset=".9" stop-color="#8fadb6"/><stop offset="1" stop-color="#788d95"/>
            </linearGradient>
            <linearGradient id="rim" gradientUnits="userSpaceOnUse" x1="-220" y1="0" x2="220" y2="0">
              <stop offset="0" stop-color="#7a949c"/><stop offset=".2" stop-color="#88a2ab"/><stop offset=".4" stop-color="#98b6c0"/><stop offset=".7" stop-color="#95b6bf"/><stop offset="1" stop-color="#9cbcc4"/>
            </linearGradient>
            <linearGradient id="bore" gradientUnits="userSpaceOnUse" x1="1175" y1="548" x2="1247" y2="668">
              <stop offset="0" stop-color="#70858d"/><stop offset=".16" stop-color="#8fa9b2"/><stop offset=".26" stop-color="#d8f2f7"/><stop offset=".32" stop-color="#e4feff"/><stop offset=".4" stop-color="#bbd9e0"/><stop offset=".58" stop-color="#93b1ba"/><stop offset=".72" stop-color="#90aeb7"/><stop offset=".82" stop-color="#a3bfc9"/><stop offset="1" stop-color="#788c93"/>
            </linearGradient>
            <linearGradient id="sky" gradientUnits="userSpaceOnUse" x1="0" y1="19" x2="0" y2="923"><stop offset="0" stop-color="#4f76a4"/><stop offset="1" stop-color="#fdfeff"/></linearGradient>
            <filter id="soft" x="-20%" y="-20%" width="140%" height="140%"><feGaussianBlur stdDeviation="4"/></filter>
            <clipPath id="rim-clip"><ellipse rx="218" ry="145"/><ellipse cy="-9" rx="220" ry="146"/></clipPath>
            <g id="front">
              <g transform="translate(1221 602) rotate(59)">
                <ellipse rx="218" ry="145" fill="url(#rim)"/>
                <ellipse cy="-9" rx="220" ry="146" fill="url(#rim)"/>
                <g clip-path="url(#rim-clip)"><g filter="url(#soft)" fill="none" stroke-linecap="round">
                  <ellipse cy="3" rx="202" ry="134" pathLength="360" stroke="#6d868e" stroke-width="13" stroke-dasharray="108 252" stroke-dashoffset="-160"/>
                  <ellipse cy="-1" rx="208" ry="138" pathLength="360" stroke="#6f8890" stroke-width="14" stroke-dasharray="44 316" stroke-dashoffset="-290"/>
                  <ellipse cy="-8" rx="217" ry="144" pathLength="360" stroke="#b4d0d8" stroke-width="8" stroke-dasharray="134 226" stroke-dashoffset="-205"/>
                  <ellipse cy="-5" rx="213" ry="141" pathLength="360" stroke="#d4eaef" stroke-width="8" stroke-dasharray="32 328" stroke-dashoffset="-204"/>
                  <ellipse cy="-5" rx="213" ry="141" pathLength="360" stroke="#fff" stroke-width="8" stroke-dasharray="16 344" stroke-dashoffset="-212"/>
                  <ellipse cy="-1" rx="208" ry="138" pathLength="360" stroke="#d0e6eb" stroke-width="8" stroke-dasharray="46 314" stroke-dashoffset="-246"/>
                  <ellipse cy="-2" rx="209" ry="139" pathLength="360" stroke="#fff" stroke-width="8" stroke-dasharray="22 338" stroke-dashoffset="-262"/>
                  <ellipse cy="-9" rx="218" ry="145" pathLength="360" stroke="#e4f8fb" stroke-width="6" stroke-dasharray="20 340" stroke-dashoffset="-286"/>
                  <ellipse cy="6" rx="199" ry="133" pathLength="360" stroke="#b4d4dc" stroke-width="8" stroke-dasharray="50 310" stroke-dashoffset="-302"/>
                  <ellipse cy="4" rx="203" ry="135" pathLength="360" stroke="#c8e6ec" stroke-width="12" stroke-dasharray="80 280" stroke-dashoffset="-327"/>
                  <ellipse cy="3" rx="205" ry="136" pathLength="360" stroke="#f4ffff" stroke-width="9" stroke-dasharray="44 316" stroke-dashoffset="-342"/>
                  <ellipse cy="0" rx="218" ry="145" pathLength="360" stroke="#7c969e" stroke-width="5" stroke-dasharray="170 190" stroke-dashoffset="-20"/>
                </g></g>
                <path d="M-218 11A220 146 0 1 1 218 11" fill="none" stroke="#000"/>
                <ellipse cy="11" rx="192" ry="128" fill="#a0b9c4" stroke="#000"/>
              </g>
              <path d="M1193 549l-14 4-11 10-6 17 1 20 7 22 12 18 15 14 15 10 17 3 15-4 11-11 5-17v-20l-6-18-12-19-18-17 1-8-8-4-6-4-1 8z" fill="url(#bore)" stroke="#000"/>
              <path d="M1210 552l8-4" stroke="#000"/>
            </g>
          </defs>
          <g transform="translate(1221 602) rotate(59)">
            <path d="M-220 -9V-119A220 146 0 0 1 220 -119V-9z" fill="url(#side)"/>
            <path d="M-220 -119A220 146 0 0 1 220 -119" fill="none" stroke="#000"/>
          </g>
          <use href="#front"/>
          <g transform="translate(914 790) rotate(59)">
            <path d="M-220 -9V-15A220 146 0 0 1 220 -15V-9z" fill="url(#side)"/>
            <path d="M-220 -9V-15A220 146 0 0 1 220 -15V-9" fill="none" stroke="#000"/>
          </g>
          <g transform="translate(-307 188)">
            <use href="#front"/>
            <path d="M1200 550q-1 20 3 34 6 22 20 38 14 14 28 18l8 1 2-13-1-19-6-18-12-19-18-17 1-8-8-4-6-4-1 8z" fill="url(#sky)" stroke="#000"/>
            <path d="M1210 552l8-4-7-4z" fill="#a0b9c4" stroke="#000"/>
          </g>
          <g class="triad">
            <path d="M374 1072l8 6" stroke="#f07070" stroke-width="4"/><path d="M389 1084l-10-2 4-7z" fill="#f07070"/>
            <path d="M376 1073l6-4" stroke="#1a9c30" stroke-width="3"/><path d="M388 1066l-5 7-4-6z" fill="#1fae38"/>
            <path d="M375 1074v-9" stroke="#1c28b0" stroke-width="3"/><path d="M375 1056l4 10h-8z" fill="#1c28b0"/>
            <text x="374" y="1054" fill="#1c28b0">Z</text><text x="390" y="1065" fill="#1fae38">Y</text><text x="393" y="1089" fill="#d03040">X</text>
          </g>
        </svg>
      </div>
    </div>
  </div>
</main>

<div class="catalog-row"><button><svg><use href="#catalog"/></svg>Catalog Browser</button></div>

<footer class="statusbar">
  <a href="http://www.ironcad.com">http://www.ironcad.com</a>
  <div class="status-right">
    <span class="view-size">View size: 1583 x&nbsp; 905</span>
    <span class="units">Units: in, deg</span>
    <button class="tool" aria-label="Fit scene"><svg><use href="#zoomfit"/></svg></button>
    <button class="tool drop" aria-label="Zoom window"><svg><use href="#zoomwin"/></svg><i class="caret"></i></button>
    <button class="tool drop" aria-label="Orbit"><svg><use href="#ycube"/></svg><i class="caret"></i></button>
    <button class="tool drop" aria-label="Views"><svg><use href="#v-front"/></svg><i class="caret"></i></button>
    <button class="tool drop" aria-label="Camera"><svg><use href="#fly"/></svg><i class="caret"></i></button>
    <button class="tool" aria-label="Perspective"><svg><use href="#wedge"/></svg></button>
    <button class="tool drop tight" aria-label="Visibility"><svg><use href="#glasses"/></svg><i class="caret"></i></button>
    <button class="tool drop tight is-on" aria-label="Shading"><svg><use href="#pcube"/></svg><i class="caret"></i></button>
    <button class="tool drop tight" aria-label="Parts"><svg><use href="#part-blue"/></svg><i class="caret"></i></button>
    <button class="tool is-on" aria-label="Select"><svg><use href="#cursor"/></svg></button>
    <button class="tool" aria-label="Pick"><svg><use href="#cursor"/></svg></button>
    <label class="combo wide"><select aria-label="Filter"><option>Any</option></select><i class="caret"></i></label>
    <label class="combo"><select aria-label="Configuration"><option>Default</option></select><i class="caret"></i></label>
    <button class="tool" aria-label="Configurations"><svg><use href="#hier2"/></svg></button>
  </div>
</footer>
<div class="taskbar" aria-hidden="true"><i></i><i></i><i></i><i></i><i></i><i class="lit"></i><i class="skip"></i><i class="red"></i><i></i><i></i><i></i></div>
</body>
</html>
```
FILE: styles.css
```css
* { box-sizing: border-box; }

body {
  margin: 0;
  min-height: 100vh;
  display: flex;
  flex-direction: column;
  background: #e1e5e9;
  color: #111;
  font: 11px/16px "Noto Sans", "Open Sans", sans-serif;
}

button {
  display: flex;
  align-items: center;
  margin: 0;
  padding: 0;
  border: 0;
  background: none;
  color: inherit;
  font: inherit;
  white-space: nowrap;
}

svg { display: block; width: 16px; height: 16px; flex: none; }
.sprite { position: absolute; width: 0; height: 0; }

.caret {
  display: inline-block;
  flex: none;
  border: 3px solid transparent;
  border-top: 3px solid #6e7379;
  border-bottom: 0;
}
.caret.large { border-width: 5px 5px 0; }
.caret.bar { border-width: 4px 4px 0; box-shadow: 0 -6px 0 -3px #444; }

.is-on {
  border: 1px solid #d9ab3e;
  border-radius: 2px;
  background: #fce694;
}

/* title bar and ribbon tabs */
.header {
  position: relative;
  display: grid;
  grid-template-columns: 50px 1fr;
  grid-template-rows: 31px 25px;
  border-bottom: 1px solid #b4b7ba;
  background: linear-gradient(#fff, #f0f0f0 60%, #fdfdfd);
  height: 56px;
}
.app-button { grid-row: 1 / 3; justify-content: center; }
.logo { width: 26px; height: 26px; }
.title-row { display: flex; align-items: center; }
.quick-access { display: flex; height: 22px; padding-left: 1px; border-left: 1px solid #c8cacd; }
.quick-access button { width: 22px; justify-content: center; }
.quick-access .wide { width: 31px; gap: 2px; border-right: 1px solid #c8cacd; }
.quick-access .more { width: 38px; }
.window-title {
  flex: 1;
  margin: 0;
  padding-right: 24px;
  text-align: center;
  font-size: 14px;
  font-weight: 400;
  color: #333;
}
.window-buttons { display: flex; align-self: flex-start; padding-right: 3px; }
.window-buttons button { width: 26px; height: 19px; justify-content: center; }
.window-buttons .close { width: 45px; margin-left: 2px; background: #c75050; }
.tab-row { display: flex; justify-content: space-between; }
.tabs { display: flex; height: 25px; }
.tabs button { padding: 0 15px; color: #4a4f57; }
.tabs .is-active {
  padding: 0 12px;
  border: 1px solid #b4b7ba;
  border-bottom: 0;
  border-radius: 3px 3px 0 0;
  background: #fff;
}
.tab-tools { display: flex; align-items: center; gap: 3px; padding: 0 5px 6px 0; height: 25px; }
.styles-button { gap: 9px; margin-right: 1px; padding-top: 4px; }
.help-menu { width: 11px; justify-content: center; }
.spot {
  position: absolute;
  left: 50%;
  top: -20px;
  width: 40px;
  height: 40px;
  margin-left: -20px;
  border: 3px solid #f5dc7c;
  border-radius: 50%;
  background: #fffbd0;
  clip-path: inset(20px 0 0 0);
}

/* ribbon */
.ribbon {
  display: flex;
  height: 95px;
  border-bottom: 1px solid #8d9196;
  background: linear-gradient(#fff 45%, #e9ebee);
}
.group {
  display: flex;
  flex-direction: column;
  padding-top: 4px;
  border-right: 1px solid #c3c7cb;
  color: #3c4149;
}
.group h2 {
  margin: 2px 0 0;
  text-align: center;
  font-size: 11px;
  font-weight: 400;
  color: #6f7484;
  white-space: nowrap;
}
.group-body { display: grid; align-items: start; height: 70px; }
.g-reference { width: 66px; }
.g-reference .group-body { grid-template-columns: 43px; justify-content: center; }
.g-feature { width: 223px; }
.g-feature .group-body { grid-template-columns: 48px 72px 1fr; padding-left: 6px; }
.g-quick { width: 104px; }
.g-quick .group-body { grid-template-columns: 1fr; }
.g-modify { width: 427px; }
.g-modify .group-body { grid-template-columns: 46px 46px 90px 89px 1fr; padding-left: 3px; }
.g-transform { width: 162px; }
.g-transform .group-body { grid-template-columns: 50px 1fr; padding-left: 1px; }
.g-direct { width: 207px; }
.g-direct .group-body { grid-template-columns: 87px 1fr; padding-left: 8px; }
.big { flex-direction: column; height: 69px; padding-top: 3px; justify-content: flex-start; }
.big.is-on { padding-top: 2px; background: linear-gradient(#fde9a4 55%, #fdf8e4 55%); }
.big svg { width: 32px; height: 32px; }
.big span { margin-top: 3px; line-height: 15px; text-align: center; }
.big .caret { margin: 0 0 3px 2px; }
.stack { display: flex; flex-direction: column; }
.after-wizard { padding-left: 3px; }
.after-big { padding-left: 6px; }
.stack button { height: 22px; }
.stack svg { margin-right: 3px; }
.stack .caret { margin-left: 5px; }
.stack button:disabled { color: #a3a6aa; }

/* selection toolbar */
.toolbar-row { height: 33px; padding: 2px 2px 0; }
.toolbar {
  display: flex;
  align-items: center;
  width: 376px;
  height: 31px;
  padding-left: 3px;
  border-bottom: 1px solid #b4b9be;
  background: linear-gradient(#f8f9fa, #e6e9ed);
}
.grip {
  width: 2px;
  height: 18px;
  margin-right: 3px;
  background: repeating-linear-gradient(#a8adb3 0 2px, transparent 2px 4px);
}
.tool { justify-content: center; width: 22px; height: 22px; }
.combo { display: flex; align-items: center; padding-right: 4px; background: #fff; }
.combo select {
  flex: 1;
  min-width: 0;
  padding: 0 0 0 3px;
  border: 0;
  appearance: none;
  background: none;
  color: #111;
  font: inherit;
}
.toolbar .combo { width: 146px; height: 26px; margin-left: 2px; }
.toolbar .combo + .combo { margin-left: 5px; }
.toolbar .tool:last-child { margin-left: 2px; }

/* docked vertical toolbars */
.workspace { flex: 1; display: flex; min-height: 0; }
.dock { width: 26px; padding-top: 192px; }
.vbar {
  display: flex;
  flex-direction: column;
  width: 25px;
  margin-left: 1px;
  border-right: 1px solid #a2a7ad;
  background: linear-gradient(90deg, #fff, #eceef1);
}
.vbar button { justify-content: center; height: 22px; }
.vbar hr { width: 14px; height: 1px; margin: 3px auto; border: 0; background: #8d9297; }
.vbar .dots {
  height: 2px;
  margin: 4px 5px;
  background: repeating-linear-gradient(90deg, #a8adb3 0 2px, transparent 2px 4px);
}
.vbar .cap {
  height: 12px;
  margin-top: 1px;
  padding-left: 12px;
  border-radius: 0 0 3px 3px;
  background: linear-gradient(90deg, #9aa0a8, #c9cdd2);
}
.vbar .cap i { border: 3px solid transparent; border-left: 4px solid #fff; border-right: 0; }
.vbar .note { position: relative; }
.note b { position: absolute; left: 12px; top: 2px; font-size: 9px; line-height: 12px; color: #1c3560; }

/* document area */
.document { flex: 1; display: flex; flex-direction: column; min-width: 0; border-left: 1px solid #9ca2a9; }
.doc-tabs {
  display: flex;
  justify-content: space-between;
  align-items: flex-end;
  height: 23px;
  padding-right: 6px;
  border-top: 1px solid #9ca2a9;
  border-bottom: 1px solid #8e959d;
  background: linear-gradient(#e6e9ee, #fff);
}
.doc-tab {
  display: flex;
  align-items: center;
  width: 110px;
  height: 20px;
  padding-left: 2px;
  border-right: 1px solid #6f757c;
  background: linear-gradient(90deg, transparent 24px, #fff 24px);
  font-weight: 700;
}
.doc-tab .slant { width: 22px; height: 20px; }
.doc-tab span { flex: 1; padding-left: 12px; border-top: 1px solid #6f757c; height: 20px; line-height: 18px; }
.doc-tab button { height: 20px; border-top: 1px solid #6f757c; padding-right: 2px; }
.tab-list { height: 20px; }
.content { flex: 1; display: flex; gap: 5px; min-height: 0; padding-right: 2px; }
.side { display: flex; flex-direction: column; width: 304px; }
.panel { flex: 1; display: flex; flex-direction: column; }
.panel-head {
  display: flex;
  align-items: center;
  height: 20px;
  padding: 0 2px 0 3px;
  background: #cdd3db;
  color: #4a4f57;
}
.panel-head span { flex: 1; }
.panel-body {
  flex: 1;
  display: flex;
  flex-direction: column;
  padding: 2px;
  border: 1px solid #99a1aa;
  border-left: 0;
}
.filter { display: flex; align-items: center; gap: 4px; height: 21px; padding-right: 3px; background: #fff; }
.filter input { flex: 1; min-width: 0; height: 20px; border: 0; outline: 0; font: inherit; }
.filter button { background: #f3eee3; }
.tree { flex: 1; padding-top: 1px; border: 1px solid #7f8790; background: #fff; color: #000; }
.tree ul { margin: 0; padding: 0; list-style: none; }
.tree li { position: relative; }
.row { position: relative; display: flex; align-items: center; height: 18px; gap: 5px; white-space: nowrap; }
.root { padding-left: 4px; }
.level-1 > li > .row { padding-left: 23px; }
.level-2 > li > .row { padding-left: 42px; }
.level-1 > li::before, .level-2 > li::before {
  content: "";
  position: absolute;
  top: 0;
  bottom: 0;
  left: 12px;
  border-left: 1px dotted #808080;
}
.level-2 > li::before { left: 31px; }
.level-1 > li:last-child::before, .level-2 > li:last-child::before { bottom: 9px; }
.row:not(.root)::before {
  content: "";
  position: absolute;
  left: 12px;
  top: 10px;
  width: 11px;
  border-top: 1px dotted #808080;
}
.level-2 .row:not(.root)::before { left: 31px; }
.box {
  position: absolute;
  left: 8px;
  top: 6px;
  width: 9px;
  height: 9px;
  border: 1px solid #919191;
  background: linear-gradient(#3a4a80, #3a4a80) center / 5px 1px no-repeat, #f4f4f4;
}
.level-2 .box { left: 27px; }
.box.plus {
  background:
    linear-gradient(#3a4a80, #3a4a80) center / 5px 1px no-repeat,
    linear-gradient(#3a4a80, #3a4a80) center / 1px 5px no-repeat,
    #f4f4f4;
}
.panel-tabs { display: flex; height: 21px; padding-left: 2px; color: #333; }
.panel-tabs button { gap: 2px; height: 20px; padding: 0 3px 0 2px; margin-right: 4px; }
.panel-tabs .is-active { border: 1px solid #a5abb2; border-top: 0; border-radius: 0 0 3px 3px; background: #fff; }
.viewport {
  flex: 1;
  min-width: 0;
  border-left: 1px solid #7f8790;
  background: linear-gradient(#4f76a4, #fdfeff);
}
.viewport > svg { width: 100%; height: 100%; }
.triad text { font-size: 9px; }

/* bottom rows */
.catalog-row { height: 25px; padding: 4px 4px 0; }
.catalog-row button {
  gap: 2px;
  height: 21px;
  padding: 0 3px;
  border: 1px solid #c9b886;
  border-bottom: 0;
  background: linear-gradient(#fbe08c, #fdf3c8);
  color: #6b675c;
}
.statusbar {
  display: flex;
  align-items: center;
  justify-content: space-between;
  height: 24px;
  padding: 0 3px;
  border-top: 1px solid #8f959c;
  background: linear-gradient(#dfe2e6, #c2c6cb);
}
.statusbar a { color: #2361b8; font-family: "Open Sans", "Noto Sans", sans-serif; font-size: 12px; }
.status-right {
  display: flex;
  align-items: center;
  height: 22px;
  padding-left: 15px;
  border-left: 1px solid #9ba0a6;
  color: #333;
  font-family: "Open Sans", "Noto Sans", sans-serif;
}
.view-size { width: 138px; }
.units { width: 90px; }
.statusbar .tool { width: 23px; }
.statusbar .drop { width: 35px; gap: 7px; }
.statusbar .tight { width: 32px; gap: 4px; }
.statusbar .combo { width: 64px; height: 20px; margin-left: 3px; }
.statusbar .combo.wide { width: 88px; }
.taskbar { display: flex; gap: 3px; height: 3px; padding-left: 174px; background: #bfc2c3; }
.taskbar i { width: 59px; border: 1px solid #8d9091; border-bottom: 0; background: #d4d6d6; }
.taskbar .lit { background: #fff; }
.taskbar .skip { width: 620px; border: 0; background: none; }
.taskbar .red { background: #c86060; border: 0; }
```
